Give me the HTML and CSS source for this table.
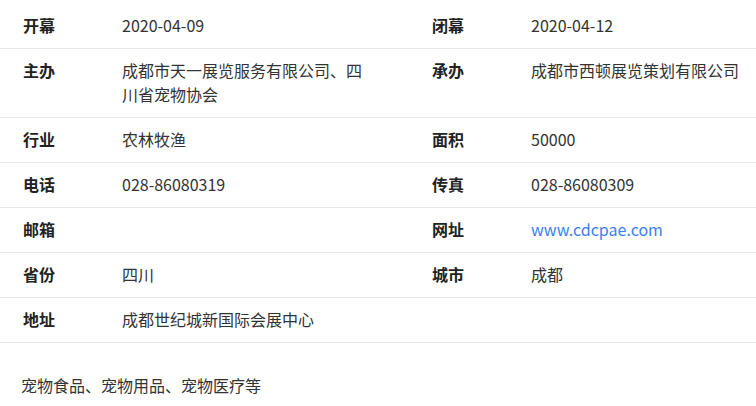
FILE: index.html
```html
<!DOCTYPE html>
<html lang="zh-CN">
<head>
  <meta charset="UTF-8" />
  <title>展会信息</title>
  <link rel="stylesheet" href="styles.css">
</head>
<body>
  <div class="info">
    <table class="info-table">
      <colgroup>
        <col class="col-label">
        <col class="col-value">
        <col class="col-label">
        <col class="col-value-last">
      </colgroup>
      <tr>
        <th>开幕</th><td>2020-04-09</td>
        <th>闭幕</th><td class="last">2020-04-12</td>
      </tr>
      <tr>
        <th>主办</th><td>成都市天一展览服务有限公司、四川省宠物协会</td>
        <th>承办</th><td class="last">成都市西顿展览策划有限公司</td>
      </tr>
      <tr>
        <th>行业</th><td>农林牧渔</td>
        <th>面积</th><td class="last">50000</td>
      </tr>
      <tr>
        <th>电话</th><td>028-86080319</td>
        <th>传真</th><td class="last">028-86080309</td>
      </tr>
      <tr>
        <th>邮箱</th><td></td>
        <th>网址</th><td class="last"><a href="#" class="link">www.cdcpae.com</a></td>
      </tr>
      <tr>
        <th>省份</th><td>四川</td>
        <th>城市</th><td class="last">成都</td>
      </tr>
      <tr>
        <th>地址</th><td colspan="3" class="last">成都世纪城新国际会展中心</td>
      </tr>
    </table>
    <p class="scope">宠物食品、宠物用品、宠物医疗等</p>
  </div>
</body>
</html>
```

FILE: styles.css
```css
* { margin: 0; padding: 0; box-sizing: border-box; }
body {
  font-family: "Noto Sans CJK SC", "Noto Sans", sans-serif;
  font-size: 16px;
  color: #333;
  background: #fff;
}
.info {
  width: 756px;
  padding-top: 4px;
}
.info-table {
  width: 100%;
  table-layout: fixed;
  border-collapse: collapse;
}
.col-label { width: 99px; }
.col-value { width: 310px; }
.col-value-last { width: 248px; }
.info-table th,
.info-table td {
  text-align: left;
  vertical-align: top;
  line-height: 24px;
  padding: 9px 23px 11px;
  border-bottom: 1px solid #e8e8e8;
}
.info-table th {
  font-weight: 700;
  color: #222;
}
.info-table td {
  font-weight: 400;
  padding-right: 45px;
}
.info-table td.last {
  padding-right: 0;
}
.link {
  color: #3d7ff5;
  text-decoration: none;
}
.scope {
  margin-top: 30px;
  padding-left: 21px;
  line-height: 24px;
}
```
